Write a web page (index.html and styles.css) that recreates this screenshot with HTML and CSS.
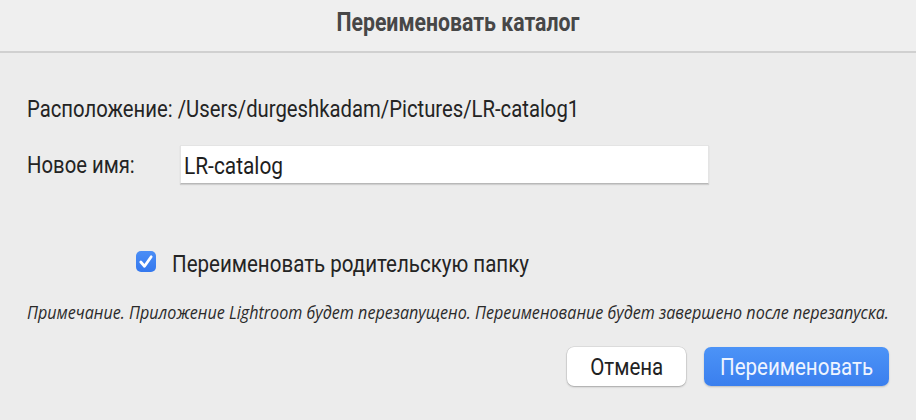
FILE: index.html
```html
<!DOCTYPE html>
<html lang="ru">
<head>
<meta charset="utf-8">
<link rel="stylesheet" href="styles.css">
</head>
<body>
<div class="dialog">
  <div class="titlebar"><span class="title">Переименовать каталог</span></div>
  <div class="content">
    <div class="location"><span class="sx">Расположение: /Users/durgeshkadam/Pictures/LR-catalog1</span></div>
    <div class="name-row">
      <div class="label"><span class="sx">Новое имя:</span></div>
      <div class="input"><span class="sx sx-input">LR-catalog</span></div>
    </div>
    <div class="check-row">
      <span class="checkbox"><svg viewBox="0 0 20 21" width="20" height="21"><path d="M4.8 11 L8.5 15.2 L15.2 5.8" fill="none" stroke="#fff" stroke-width="2.8" stroke-linecap="round" stroke-linejoin="round"/></svg></span>
      <span class="check-label"><span class="sx sx-check">Переименовать родительскую папку</span></span>
    </div>
    <div class="note"><span class="sx sx-note">Примечание. Приложение Lightroom будет перезапущено. Переименование будет завершено после перезапуска.</span></div>
    <div class="buttons">
      <div class="btn cancel"><span class="sx sx-center">Отмена</span></div>
      <div class="btn primary"><span class="sx sx-center">Переименовать</span></div>
    </div>
  </div>
</div>
</body>
</html>
```
FILE: styles.css
```css
html, body {
  margin: 0;
  padding: 0;
  width: 916px;
  height: 420px;
  overflow: hidden;
  background: #ececec;
  font-family: Roboto, "Liberation Sans", sans-serif;
  color: #242424;
}
.dialog {
  width: 916px;
  height: 420px;
  display: flex;
  flex-direction: column;
  overflow: hidden;
}
.sx {
  display: inline-block;
  white-space: nowrap;
  transform: scaleX(0.845);
  transform-origin: left center;
}
.sx-input {
  transform: scaleX(0.87);
}
.sx-check {
  transform: scaleX(0.855);
}
.sx-center {
  transform: scaleX(0.855);
  transform-origin: center center;
}
.titlebar {
  height: 53px;
  box-sizing: border-box;
  background: #efefef;
  border-bottom: 2px solid #d0d0d0;
  padding-top: 8px;
  text-align: center;
}
.title {
  display: inline-block;
  white-space: nowrap;
  font-weight: bold;
  font-size: 25px;
  line-height: 30px;
  color: #474747;
  transform: scaleX(0.85);
  transform-origin: center center;
}
.content {
  padding: 41px 27px 0 27px;
  display: flex;
  flex-direction: column;
}
.location {
  font-size: 24px;
  line-height: 30px;
  height: 30px;
}
.name-row {
  display: flex;
  align-items: flex-start;
  margin-top: 21px;
  height: 39px;
}
.label {
  font-size: 24px;
  line-height: 39px;
  padding-top: 1px;
  width: 153px;
  flex: none;
}
.input {
  width: 529px;
  height: 39px;
  flex: none;
  background: #fff;
  box-sizing: border-box;
  border: 1px solid #e4e4e4;
  border-bottom-color: #b8b8b8;
  box-shadow: 0 1px 1px rgba(0,0,0,0.12);
  font-size: 24px;
  padding: 2px 0 0 3px;
  line-height: 36px;
  color: #1e1e1e;
}
.check-row {
  display: flex;
  align-items: flex-start;
  margin-top: 65px;
  padding-left: 109px;
  height: 30px;
}
.checkbox {
  flex: none;
  width: 20px;
  height: 21px;
  margin-top: 2px;
  border-radius: 5px;
  background: linear-gradient(#4b8ef6, #3478ee);
  display: flex;
  align-items: center;
  justify-content: center;
  margin-right: 16px;
}
.checkbox svg {
  display: block;
}
.check-label {
  font-size: 24px;
  line-height: 30px;
}
.note {
  margin-top: 20px;
  font-family: "Open Sans", sans-serif;
  font-style: italic;
  font-size: 19px;
  line-height: 26px;
  height: 26px;
  color: #2a2a2a;
}
.sx-note {
  transform: scaleX(0.849);
}
.buttons {
  display: flex;
  justify-content: flex-end;
  gap: 18px;
  margin-top: 22px;
}
.btn {
  height: 39px;
  border-radius: 7px;
  display: flex;
  align-items: center;
  justify-content: center;
  font-size: 24px;
  line-height: 30px;
  box-sizing: border-box;
  flex: none;
}
.cancel {
  width: 119px;
  background: #fff;
  color: #222;
  box-shadow: 0 1px 2px rgba(0,0,0,0.25), 0 0 0 0.5px rgba(0,0,0,0.12);
}
.primary {
  width: 185px;
  background: linear-gradient(#4c93f7, #3a7fee);
  color: #eef4ff;
  box-shadow: 0 1px 2px rgba(0,0,0,0.2);
}
```
